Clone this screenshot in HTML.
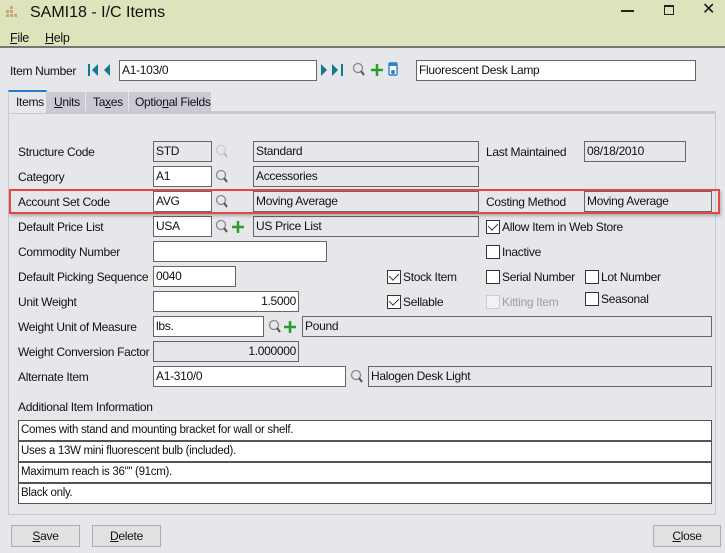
<!DOCTYPE html>
<html><head><meta charset="utf-8"><style>
*{box-sizing:border-box}
body{margin:0;width:725px;height:553px;background:#e6e7eb;font-family:"Liberation Sans",sans-serif;font-size:12px;color:#111;position:relative;overflow:hidden;letter-spacing:-0.3px}
.a{position:absolute;white-space:nowrap}
.tb{position:absolute;left:0;top:0;width:725px;height:48px;background:#dde3bb;border-bottom:2px solid #777}
.in{position:absolute;height:21px;background:#fff;border:1px solid #666;padding:1px 2px;line-height:16px;font-size:12px}
.dis{background:#e6e7eb}
.r{text-align:right}
.cb{position:absolute;width:14px;height:14px;border:1px solid #333;background:#fff}
.cb.k::after{content:"";position:absolute;left:3px;top:0px;width:5px;height:8px;border:solid #333;border-width:0 1.5px 1.5px 0;transform:rotate(45deg)}
.btn{position:absolute;height:22px;background:#e1e1e1;border:1px solid #adadad;text-align:center;line-height:20px}
.ta{position:absolute;left:18px;width:694px;height:21px;background:#fff;border:1px solid #555;padding:1px 2px;line-height:17px;font-size:11.5px}
</style></head><body>
<div class="tb"></div>
<svg class="a" style="left:5px;top:6px" width="14" height="14"><g fill="#c9a57a"><rect x="5" y="0" width="3" height="3"/><rect x="1" y="4" width="3" height="3"/><rect x="5" y="4" width="3" height="3"/><rect x="1" y="8" width="3" height="3"/><rect x="5" y="8" width="3" height="3"/><rect x="9" y="8" width="3" height="3"/></g></svg>
<div class="a" style="left:30px;top:4px;font-size:16px;letter-spacing:0">SAMI18 - I/C Items</div>
<div class="a" style="left:621px;top:10px;width:13px;height:2px;background:#222"></div>
<div class="a" style="left:664px;top:5px;width:10px;height:10px;border:1.5px solid #222;border-top-width:2px"></div>
<div class="a" style="left:702px;top:-1px;font-size:16px">✕</div>
<div class="a" style="left:10px;top:31px;font-size:12.5px"><u>F</u>ile</div>
<div class="a" style="left:45px;top:31px;font-size:12.5px"><u>H</u>elp</div>

<div class="a" style="left:10px;top:64px">Item Number</div>
<svg class="a" style="left:88px;top:63px" width="30" height="14"><rect x="0" y="1" width="2" height="12" fill="#16798c"/><path d="M10 1L4 7L10 13Z M22 1L16 7L22 13Z" fill="#16798c"/></svg>
<div class="in" style="left:119px;top:60px;width:198px">A1-103/0</div>
<svg class="a" style="left:321px;top:63px" width="28" height="14"><path d="M0 1L6 7L0 13Z M11 1L17 7L11 13Z" fill="#16798c"/><rect x="20" y="1" width="2" height="12" fill="#16798c"/></svg>
<svg class="a" style="left:352px;top:62px" width="50" height="16"><circle cx="6" cy="6" r="4.5" fill="none" stroke="#888" stroke-width="1.3"/><path d="M9 9L12 13" stroke="#555" stroke-width="2"/><path d="M25 2V14M19 8H31" stroke="#2d9a2d" stroke-width="2.5"/><rect x="37" y="1" width="8" height="12" rx="1" fill="#fff" stroke="#2f7fd0" stroke-width="1.4"/><rect x="37" y="1" width="8" height="3" fill="#2f7fd0"/><circle cx="41" cy="10" r="2" fill="#2f7fd0"/></svg>
<div class="in" style="left:416px;top:60px;width:280px">Fluorescent Desk Lamp</div>

<!-- tabs -->
<div class="a" style="left:8px;top:90px;width:39px;height:23px;background:#e6e7eb;border-top:2px solid #2b78c8;border-left:1px solid #ccc;border-right:1px solid #ccc;padding:3px 0 0 7px;z-index:2">Items</div>
<div class="a" style="left:47px;top:92px;width:38px;height:20px;background:#c9cad4;padding:3px 0 0 7px"><u>U</u>nits</div>
<div class="a" style="left:85px;top:92px;width:43px;height:20px;background:#c9cad4;border-left:1px solid #e6e7eb;padding:3px 0 0 7px">Ta<u>x</u>es</div>
<div class="a" style="left:128px;top:92px;width:83px;height:20px;background:#c9cad4;border-left:1px solid #e6e7eb;padding:3px 0 0 6px">Optio<u>n</u>al Fields</div>
<div class="a" style="left:8px;top:111px;width:708px;height:404px;border:1px solid #c8c9d2;border-top:3px solid #c8c9d2"></div>

<!-- labels -->
<div class="a" style="left:18px;top:145px">Structure Code</div>
<div class="a" style="left:18px;top:170px">Category</div>
<div class="a" style="left:18px;top:195px">Account Set Code</div>
<div class="a" style="left:18px;top:220px">Default Price List</div>
<div class="a" style="left:18px;top:245px">Commodity Number</div>
<div class="a" style="left:18px;top:270px">Default Picking Sequence</div>
<div class="a" style="left:18px;top:295px">Unit Weight</div>
<div class="a" style="left:18px;top:320px">Weight Unit of Measure</div>
<div class="a" style="left:18px;top:345px">Weight Conversion Factor</div>
<div class="a" style="left:18px;top:370px">Alternate Item</div>
<div class="a" style="left:18px;top:400px">Additional Item Information</div>
<div class="a" style="left:486px;top:145px">Last Maintained</div>
<div class="a" style="left:486px;top:195px">Costing Method</div>

<!-- inputs -->
<div class="in dis" style="left:153px;top:141px;width:59px">STD</div>
<div class="in dis" style="left:253px;top:141px;width:226px">Standard</div>
<div class="in dis" style="left:584px;top:141px;width:102px">08/18/2010</div>
<div class="in" style="left:153px;top:166px;width:59px">A1</div>
<div class="in dis" style="left:253px;top:166px;width:226px">Accessories</div>
<div class="in" style="left:153px;top:191px;width:59px">AVG</div>
<div class="in dis" style="left:253px;top:191px;width:226px">Moving Average</div>
<div class="in dis" style="left:584px;top:191px;width:128px">Moving Average</div>
<div class="in" style="left:153px;top:216px;width:59px">USA</div>
<div class="in dis" style="left:253px;top:216px;width:226px">US Price List</div>
<div class="in" style="left:153px;top:241px;width:174px"></div>
<div class="in" style="left:153px;top:266px;width:83px">0040</div>
<div class="in r" style="left:153px;top:291px;width:146px">1.5000</div>
<div class="in" style="left:153px;top:316px;width:111px">lbs.</div>
<div class="in dis" style="left:302px;top:316px;width:410px">Pound</div>
<div class="in dis r" style="left:153px;top:341px;width:146px">1.000000</div>
<div class="in" style="left:153px;top:366px;width:193px">A1-310/0</div>
<div class="in dis" style="left:368px;top:366px;width:344px">Halogen Desk Light</div>

<!-- search icons -->
<svg class="a" style="left:215px;top:144px" width="14" height="16"><circle cx="6" cy="6" r="4.5" fill="none" stroke="#ccc" stroke-width="1.3"/><path d="M9 9L12 13" stroke="#bbb" stroke-width="2"/></svg>
<svg class="a" style="left:215px;top:169px" width="14" height="16"><circle cx="6" cy="6" r="4.5" fill="none" stroke="#888" stroke-width="1.3"/><path d="M9 9L12 13" stroke="#555" stroke-width="2"/></svg>
<svg class="a" style="left:215px;top:194px" width="14" height="16"><circle cx="6" cy="6" r="4.5" fill="none" stroke="#888" stroke-width="1.3"/><path d="M9 9L12 13" stroke="#555" stroke-width="2"/></svg>
<svg class="a" style="left:215px;top:219px" width="32" height="16"><circle cx="6" cy="6" r="4.5" fill="none" stroke="#888" stroke-width="1.3"/><path d="M9 9L12 13" stroke="#555" stroke-width="2"/><path d="M23 2V14M17 8H29" stroke="#2d9a2d" stroke-width="2.5"/></svg>
<svg class="a" style="left:268px;top:319px" width="32" height="16"><circle cx="6" cy="6" r="4.5" fill="none" stroke="#888" stroke-width="1.3"/><path d="M9 9L12 13" stroke="#555" stroke-width="2"/><path d="M22 2V14M16 8H28" stroke="#2d9a2d" stroke-width="2.5"/></svg>
<svg class="a" style="left:350px;top:369px" width="14" height="16"><circle cx="6" cy="6" r="4.5" fill="none" stroke="#888" stroke-width="1.3"/><path d="M9 9L12 13" stroke="#555" stroke-width="2"/></svg>

<!-- checkboxes -->
<div class="cb k" style="left:486px;top:220px"></div><div class="a" style="left:502px;top:220px">Allow Item in Web Store</div>
<div class="cb" style="left:486px;top:245px"></div><div class="a" style="left:502px;top:245px">Inactive</div>
<div class="cb k" style="left:387px;top:270px"></div><div class="a" style="left:403px;top:270px">Stock Item</div>
<div class="cb" style="left:486px;top:270px"></div><div class="a" style="left:502px;top:270px">Serial Number</div>
<div class="cb" style="left:585px;top:270px"></div><div class="a" style="left:601px;top:270px">Lot Number</div>
<div class="cb k" style="left:387px;top:295px"></div><div class="a" style="left:403px;top:295px">Sellable</div>
<div class="cb" style="left:486px;top:295px;border-color:#ccc;background:#f2f2f2"></div><div class="a" style="left:502px;top:295px;color:#a0a0a0">Kitting Item</div>
<div class="cb" style="left:585px;top:292px"></div><div class="a" style="left:601px;top:292px">Seasonal</div>

<!-- red highlight -->
<div class="a" style="left:9px;top:189px;width:711px;height:25px;border:2px solid #e84545;box-shadow:1px 2px 3px rgba(0,0,0,.25)"></div>

<!-- text area -->
<div class="ta" style="top:420px">Comes with stand and mounting bracket for wall or shelf.</div>
<div class="ta" style="top:441px">Uses a 13W mini fluorescent bulb (included).</div>
<div class="ta" style="top:462px">Maximum reach is 36"" (91cm).</div>
<div class="ta" style="top:483px">Black only.</div>

<div class="btn" style="left:11px;top:525px;width:69px"><u>S</u>ave</div>
<div class="btn" style="left:92px;top:525px;width:69px"><u>D</u>elete</div>
<div class="btn" style="left:653px;top:525px;width:68px"><u>C</u>lose</div>
</body></html>
